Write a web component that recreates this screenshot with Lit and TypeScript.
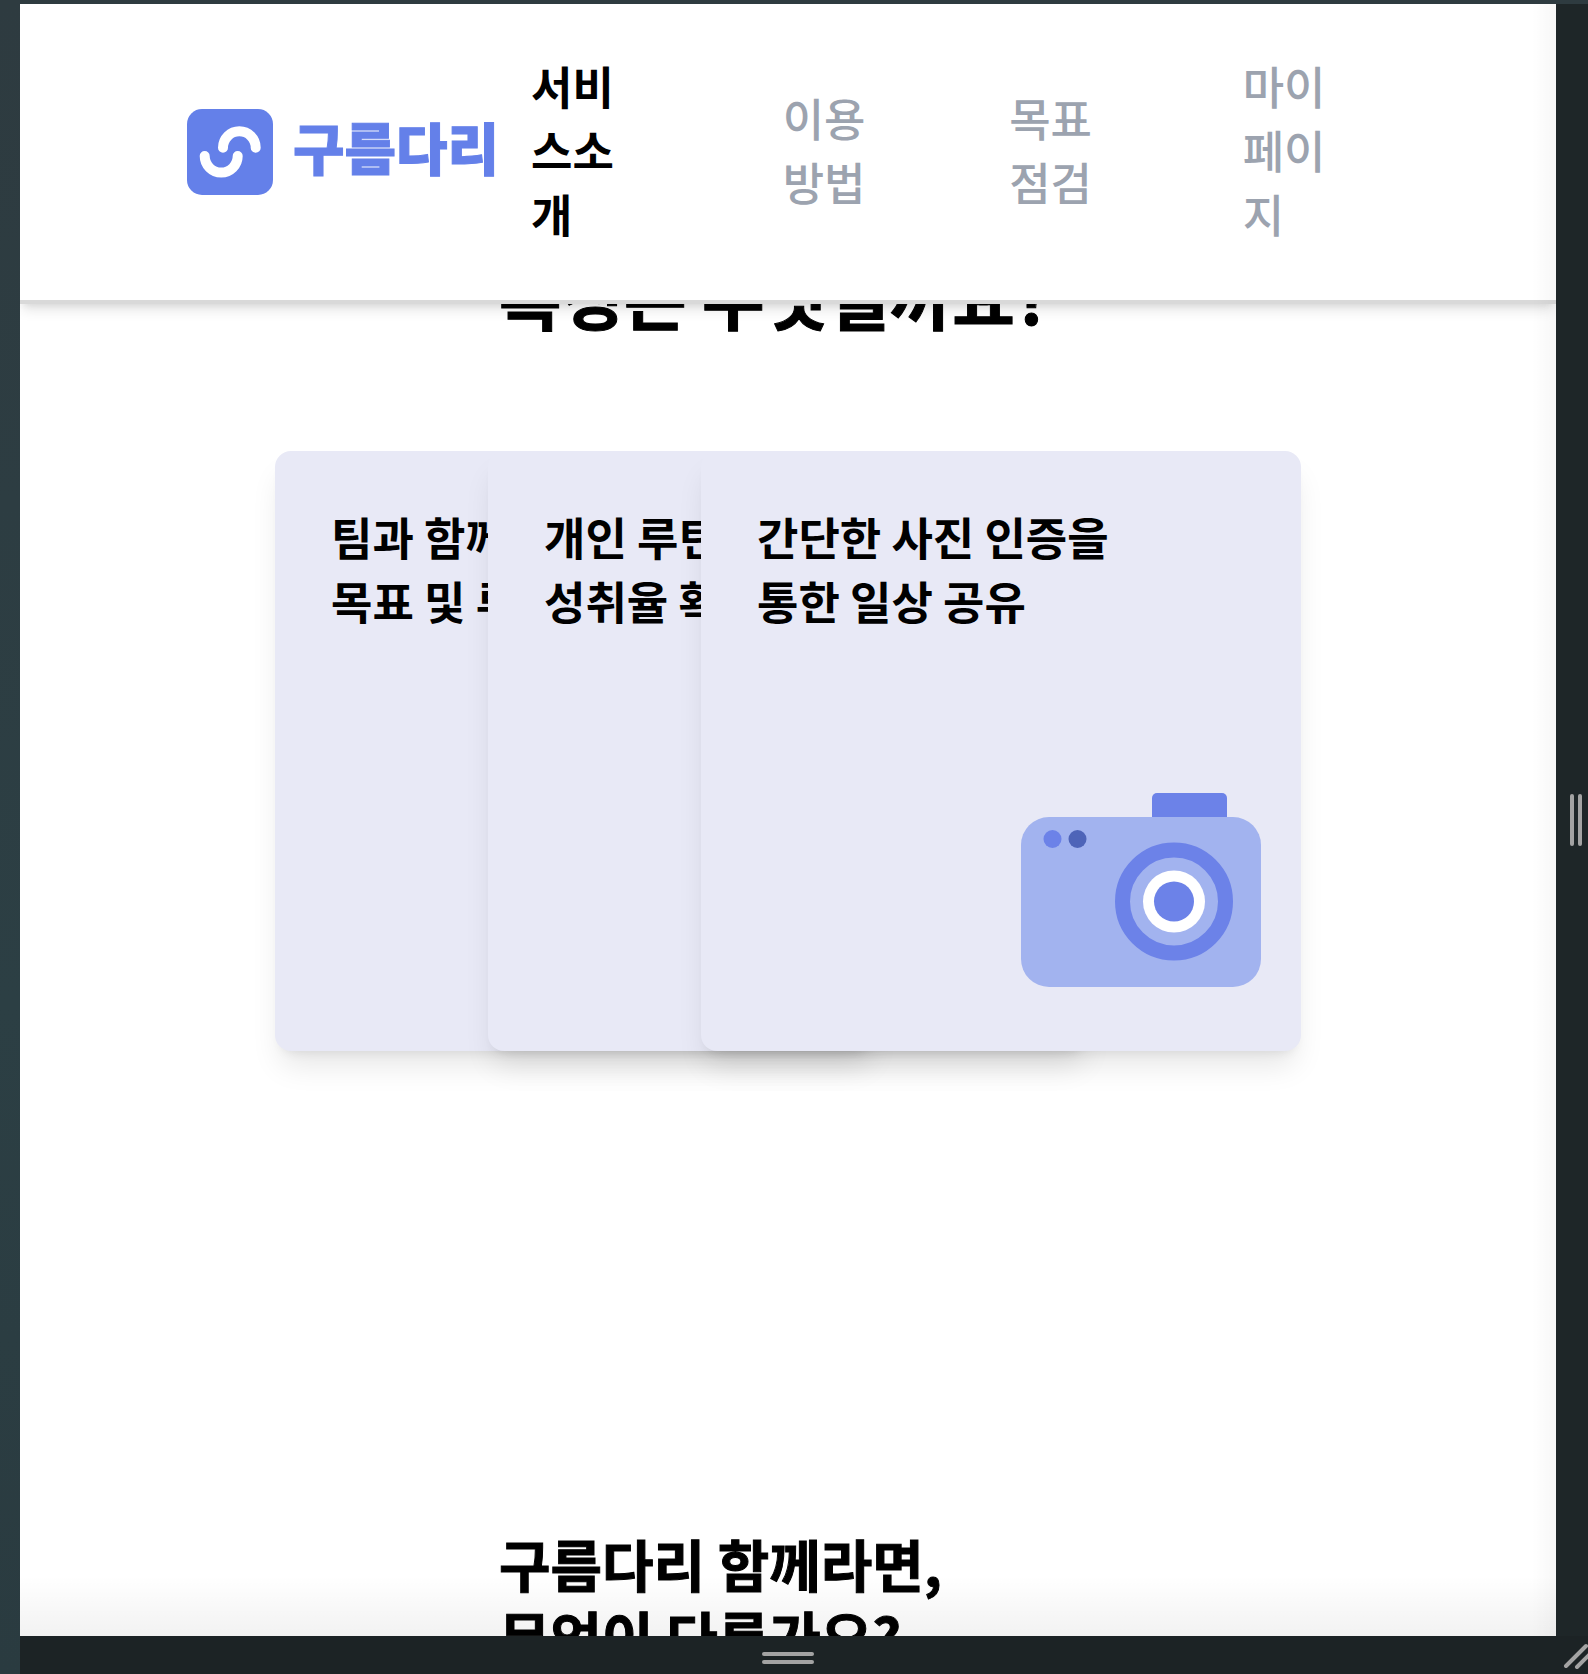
import { LitElement, html, css, svg } from "lit";
import { customElement } from "lit/decorators.js";

interface NavItem {
  label: string;
  href: string;
  current?: boolean;
}

interface Feature {
  lines: string[];
  camera?: boolean;
}

const NAV: NavItem[] = [
  { label: "서비스소개", href: "#service", current: true },
  { label: "이용방법", href: "#guide" },
  { label: "목표점검", href: "#goals" },
  { label: "마이페이지", href: "#mypage" },
];

const FEATURES: Feature[] = [
  { lines: ["팀과 함께", "목표 및 루틴"] },
  { lines: ["개인 루틴", "성취율 확인"] },
  { lines: ["간단한 사진 인증을", "통한 일상 공유"], camera: true },
];

const logoMark = svg`
  <rect width="86" height="86" rx="15" fill="#6480e9" />
  <g fill="none" stroke="#fff" stroke-width="10" stroke-linecap="round">
    <path d="M36 38.7A16.3 16.3 0 0 1 68.7 38.7" />
    <path d="M17.7 47A16.5 16.5 0 0 0 50.7 47" />
  </g>`;

const cameraShapes = svg`
  <rect x="131" width="75" height="40" rx="5" fill="#6c82e8" />
  <rect y="24" width="240" height="170" rx="28" fill="#a2b3ef" />
  <circle cx="31.5" cy="46" r="9" fill="#6c82e8" />
  <circle cx="56.5" cy="46" r="9" fill="#4e64b8" />
  <circle cx="153" cy="108.5" r="51.5" fill="none" stroke="#6c82e8" stroke-width="15" />
  <circle cx="153" cy="108.5" r="31" fill="#fff" />
  <circle cx="153" cy="108.5" r="20" fill="#6c82e8" />`;

@customElement("site-header")
export class SiteHeader extends LitElement {
  static styles = css`
    :host {
      display: block;
      position: relative;
      z-index: 1;
    }
    .bar {
      display: flex;
      align-items: center;
      gap: 32px;
      padding: 50px 167px;
      background: #fff;
      border-bottom: 4px solid #d9d9d9;
      box-shadow: 0 8px 12px -2px rgb(0 0 0 / 0.1), 0 4px 8px -4px rgb(0 0 0 / 0.1);
    }
    .brand {
      display: flex;
      align-items: center;
      gap: 20px;
      color: #6480e9;
      text-decoration: none;
    }
    .mark {
      display: block;
      width: 86px;
      height: 86px;
    }
    .name {
      padding-bottom: 12px;
      font-size: 56px;
      line-height: 64px;
      font-weight: 900;
      white-space: nowrap;
      -webkit-text-stroke: 1px #6480e9;
    }
    .links {
      flex: 1;
      display: grid;
      grid-template-columns: 251fr 226fr 233fr 146fr;
      align-items: center;
      padding-bottom: 4px;
    }
    .link {
      max-width: 96px;
      font-size: 45px;
      line-height: 64px;
      font-weight: 500;
      color: #9ca3af;
      text-decoration: none;
    }
    .current {
      font-weight: 700;
      color: #000;
    }
  `;

  render() {
    return html`
      <header class="bar">
        <a class="brand" href="#home">
          <svg class="mark" viewBox="0 0 86 86" aria-hidden="true">${logoMark}</svg>
          <span class="name">구름다리</span>
        </a>
        <nav class="links">
          ${NAV.map(
            (item) => html`<a class="link ${item.current ? "current" : ""}" href=${item.href}>${item.label}</a>`
          )}
        </nav>
      </header>
    `;
  }
}

@customElement("feature-deck")
export class FeatureDeck extends LitElement {
  static styles = css`
    :host {
      display: block;
    }
    .deck {
      display: flex;
      justify-content: center;
    }
    .card {
      box-sizing: border-box;
      flex: none;
      display: flex;
      flex-direction: column;
      justify-content: space-between;
      width: 600px;
      height: 600px;
      padding: 54px 40px 64px 56px;
      border-radius: 16px;
      background: #e8e9f6;
      box-shadow: 0 20px 30px -6px rgb(0 0 0 / 0.1), 0 8px 12px -8px rgb(0 0 0 / 0.1);
    }
    .card + .card {
      margin-left: -387px;
    }
    .title {
      margin: 0;
      font-size: 45px;
      line-height: 64px;
      font-weight: 700;
      white-space: nowrap;
    }
    .line {
      display: block;
    }
    .camera {
      align-self: flex-end;
      width: 240px;
      height: 194px;
    }
  `;

  render() {
    return html`
      <div class="deck">
        ${FEATURES.map(
          (f) => html`
            <article class="card">
              <h3 class="title">${f.lines.map((l) => html`<span class="line">${l}</span>`)}</h3>
              ${f.camera
                ? html`<svg class="camera" viewBox="0 0 240 194" aria-hidden="true">${cameraShapes}</svg>`
                : ""}
            </article>
          `
        )}
      </div>
    `;
  }
}

@customElement("app-root")
export class AppRoot extends LitElement {
  static styles = css`
    :host {
      display: grid;
      grid-template-columns: 20px minmax(0, 1fr) 32px;
      grid-template-rows: 4px minmax(0, 1fr) 38px;
      height: 100vh;
      overflow: hidden;
      background: linear-gradient(180deg, #2e3b40, #2c3f44 60%, #2a3b40);
      color: #000;
      font-family: "Noto Sans CJK KR", "Noto Sans", sans-serif;
    }
    .page {
      grid-area: 2 / 2;
      position: relative;
      overflow: hidden;
      background: #fff;
    }
    /* soft shading along the right and bottom edges of the viewport */
    .page::after {
      content: "";
      position: absolute;
      inset: 0;
      z-index: 2;
      pointer-events: none;
      background:
        linear-gradient(0deg, rgb(0 0 0 / 0.05), transparent 60px),
        linear-gradient(270deg, rgb(0 0 0 / 0.03), transparent 24px);
    }
    .intro {
      margin-top: -48px;
    }
    .compare {
      margin-top: 476px;
    }
    .heading {
      width: 578px;
      max-width: 100%;
      margin: 0 auto;
      font-size: 56px;
      line-height: 72px;
      font-weight: 700;
      white-space: nowrap;
      -webkit-text-stroke: 1px #000;
    }
    .large {
      font-size: 68px;
      line-height: 80px;
    }
    .deck {
      margin-top: 115px;
    }
    .line {
      display: block;
    }
    .side,
    .foot {
      display: flex;
      align-items: center;
      justify-content: center;
      gap: 4px;
      background: #1e2628;
    }
    .side {
      grid-area: 2 / 3;
      padding-left: 8px;
    }
    .foot {
      grid-area: 3 / 2;
      flex-direction: column;
      padding-top: 6px;
      background: #1c2325;
    }
    .grip {
      background: #a3a3a3;
      border-radius: 2px;
    }
    .side .grip {
      width: 4px;
      height: 52px;
    }
    .foot .grip {
      width: 52px;
      height: 4px;
    }
    .corner {
      grid-area: 3 / 3;
      display: flex;
      align-items: flex-end;
      justify-content: flex-end;
      background: #1c2325;
    }
    .lines {
      width: 32px;
      height: 38px;
    }
  `;

  render() {
    return html`
      <div class="page">
        <site-header></site-header>
        <main>
          <section class="intro">
            <h2 class="heading large">특징은 무엇일까요?</h2>
            <feature-deck class="deck"></feature-deck>
          </section>
          <section class="compare">
            <h2 class="heading">
              <span class="line">구름다리 함께라면,</span>
              <span class="line">무엇이 다른가요?</span>
            </h2>
          </section>
        </main>
      </div>
      <div class="side"><span class="grip"></span><span class="grip"></span></div>
      <div class="foot"><span class="grip"></span><span class="grip"></span></div>
      <div class="corner">
        <svg class="lines" viewBox="0 0 32 38" aria-hidden="true">
          <path d="M10 30L30 10M21 31L34 18" fill="none" stroke="#a3a3a3" stroke-width="4" stroke-linecap="round" />
        </svg>
      </div>
    `;
  }
}
